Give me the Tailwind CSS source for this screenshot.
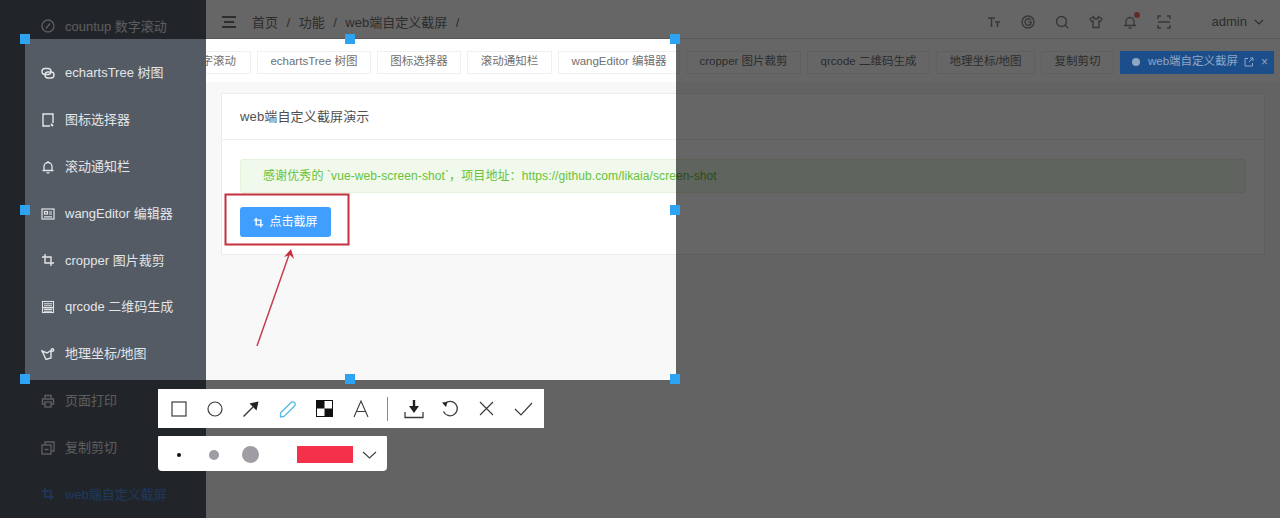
<!DOCTYPE html>
<html lang="zh-CN">
<head>
  <meta charset="UTF-8" />
  <title>web端自定义截屏</title>
  <script src="https://cdn.jsdelivr.net/npm/@tailwindcss/browser@4"></script>
</head>
<body class="relative h-screen overflow-hidden bg-[#f8f8f8] font-['Liberation_Sans','Noto_Sans_CJK_SC',sans-serif] text-[#707070]">
  <div class="flex h-full">

    <!-- sidebar -->
    <aside class="w-[206px] shrink-0 overflow-hidden bg-[#545b64] pt-[3px] text-[13px] text-[#e3e5e8]">
      <div class="flex h-[46.8px] items-center gap-[10px] pl-[41px]">
        <svg class="size-[14px]" viewBox="0 0 14 14" fill="none" stroke="currentColor" stroke-width="1.4"><circle cx="7" cy="7" r="6"/><path d="M5 9.5 9 4.5"/></svg>
        <span>countup 数字滚动</span>
      </div>
      <div class="flex h-[46.8px] items-center gap-[10px] pl-[41px]">
        <svg class="size-[14px]" viewBox="0 0 14 14" fill="none" stroke="currentColor" stroke-width="1.4"><rect x="1" y="2.5" width="9" height="6" rx="3"/><rect x="4" y="6" width="9" height="6" rx="3"/></svg>
        <span>echartsTree 树图</span>
      </div>
      <div class="flex h-[46.8px] items-center gap-[10px] pl-[41px]">
        <svg class="size-[14px]" viewBox="0 0 14 14" fill="none" stroke="currentColor" stroke-width="1.4"><path d="M9 13H2V1h10v9"/><path d="M10 11l2 2" stroke-width="2"/></svg>
        <span>图标选择器</span>
      </div>
      <div class="flex h-[46.8px] items-center gap-[10px] pl-[41px]">
        <svg class="size-[14px]" viewBox="0 0 14 14" fill="none" stroke="currentColor" stroke-width="1.3"><path d="M3 10.500V6.500a4 4 0 0 1 8 0v4zM1.500 10.500h11M5.500 12.800h3M7 1v1"/></svg>
        <span>滚动通知栏</span>
      </div>
      <div class="flex h-[46.8px] items-center gap-[10px] pl-[41px]">
        <svg class="size-[14px]" viewBox="0 0 14 14" fill="none" stroke="currentColor" stroke-width="1.2"><rect x="1" y="2" width="12" height="10"/><rect x="3.500" y="4.500" width="3" height="2.500"/><path d="M8 5h3M8 7h3M3 9.800h8"/></svg>
        <span>wangEditor 编辑器</span>
      </div>
      <div class="flex h-[46.8px] items-center gap-[10px] pl-[41px]">
        <svg class="size-[14px]" viewBox="0 0 14 14" fill="none" stroke="currentColor" stroke-width="1.4"><path d="M4 1v9h9M1 4h9v9"/></svg>
        <span>cropper 图片裁剪</span>
      </div>
      <div class="flex h-[46.8px] items-center gap-[10px] pl-[41px]">
        <svg class="size-[14px]" viewBox="0 0 14 14" fill="none" stroke="currentColor" stroke-width="1.1"><rect x="1.500" y="1.500" width="11" height="11"/><path d="M3 3.800h8M3 5.800h8M1.500 7.600h11M3 9.400h8M3 11.200h8"/></svg>
        <span>qrcode 二维码生成</span>
      </div>
      <div class="flex h-[46.8px] items-center gap-[10px] pl-[41px]">
        <svg class="size-[14px]" viewBox="0 0 14 14" fill="none" stroke="currentColor" stroke-width="1.4"><path d="M1 4l5 2 4-2.500V11l-5 1.500L3 8z"/><circle cx="11.500" cy="3" r="1.200"/></svg>
        <span>地理坐标/地图</span>
      </div>
      <div class="flex h-[46.8px] items-center gap-[10px] pl-[41px]">
        <svg class="size-[14px]" viewBox="0 0 14 14" fill="none" stroke="currentColor" stroke-width="1.4"><path d="M4 5V1.500h6V5M4 10H1.500V5h11v5H10"/><rect x="4" y="8" width="6" height="5"/></svg>
        <span>页面打印</span>
      </div>
      <div class="flex h-[46.8px] items-center gap-[10px] pl-[41px]">
        <svg class="size-[14px]" viewBox="0 0 14 14" fill="none" stroke="currentColor" stroke-width="1.4"><rect x="1" y="4" width="9" height="9"/><path d="M4 4V1h9v9h-3M3.500 8.500h4"/></svg>
        <span>复制剪切</span>
      </div>
      <div class="flex h-[46.8px] items-center gap-[10px] pl-[41px] text-[#4a90e8]">
        <svg class="size-[14px]" viewBox="0 0 14 14" fill="none" stroke="currentColor" stroke-width="1.4"><path d="M4 1v9h9M1 4h9v9"/></svg>
        <span>web端自定义截屏</span>
      </div>
    </aside>

    <div class="flex min-w-0 flex-1 flex-col">
      <!-- top bar -->
      <header class="flex h-[39px] shrink-0 items-center border-b border-[#dedede] bg-white pt-[6px] text-[13px]">
        <svg class="ml-[16px] h-[12px] w-[14px]" viewBox="0 0 14 12" fill="currentColor"><path d="M0 0h14v2H0zM2 5h10v2H2zM0 10h14v2H0z"/></svg>
        <nav class="ml-[16px] flex translate-y-[1px] gap-[8.5px]">
          <span>首页</span><span>/</span><span>功能</span><span>/</span><span>web端自定义截屏</span><span>/</span>
        </nav>
        <div class="ml-auto flex items-center gap-[20px] text-[#8a8a8a]">
          <svg class="size-[14px]" viewBox="0 0 14 14" fill="none" stroke="currentColor" stroke-width="1.5"><path d="M1 3h7M4.500 3v9M8 7h5M10.500 7v5"/></svg>
          <svg class="size-[14px]" viewBox="0 0 14 14" fill="none" stroke="currentColor" stroke-width="1.4"><circle cx="7" cy="7" r="6"/><path d="M10 5a3.300 3.300 0 1 0 0 4V7H7.500"/></svg>
          <svg class="size-[14px]" viewBox="0 0 14 14" fill="none" stroke="currentColor" stroke-width="1.4"><circle cx="6.500" cy="6.500" r="5"/><path d="M10 10l3 3"/></svg>
          <svg class="size-[14px]" viewBox="0 0 14 14" fill="none" stroke="currentColor" stroke-width="1.4"><path d="M4.500 1.500 1 4l1.500 2.500L4 6v6.500h6V6l1.500.5L13 4 9.500 1.500a2.500 2.500 0 0 1-5 0z"/></svg>
          <span class="relative">
            <svg class="size-[14px]" viewBox="0 0 14 14" fill="none" stroke="currentColor" stroke-width="1.3"><path d="M3 10.500V6.500a4 4 0 0 1 8 0v4zM1 10.500h12M5.500 13h3"/></svg>
            <span class="absolute top-[-3px] right-[-3px] size-[6px] rounded-full bg-[#f56c6c]"></span>
          </span>
          <svg class="size-[14px]" viewBox="0 0 14 14" fill="none" stroke="currentColor" stroke-width="1.4"><path d="M1 4V1h3M10 1h3v3M13 10v3h-3M4 13H1v-3M1 7h12"/></svg>
        </div>
        <span class="ml-[41px]">admin</span>
        <svg class="mr-[16px] ml-[7px] h-[6px] w-[10px]" viewBox="0 0 10 6" fill="none" stroke="currentColor" stroke-width="1.2"><path d="M1 1l4 4 4-4"/></svg>
      </header>

      <!-- tabs -->
      <div class="flex h-[43px] shrink-0 items-center justify-end gap-[6px] overflow-hidden bg-white pt-[3px] pr-[6px] text-[11.5px]">
        <div class="flex h-[23px] w-[120px] shrink-0 items-center justify-center border border-[#f0f0f0] bg-white">countup 数字滚动</div>
        <div class="flex h-[23px] w-[114px] shrink-0 items-center justify-center border border-[#f0f0f0] bg-white">echartsTree 树图</div>
        <div class="flex h-[23px] w-[84px] shrink-0 items-center justify-center border border-[#f0f0f0] bg-white">图标选择器</div>
        <div class="flex h-[23px] w-[85px] shrink-0 items-center justify-center border border-[#f0f0f0] bg-white">滚动通知栏</div>
        <div class="flex h-[23px] w-[122px] shrink-0 items-center justify-center border border-[#f0f0f0] bg-white">wangEditor 编辑器</div>
        <div class="flex h-[23px] w-[115px] shrink-0 items-center justify-center border border-[#f0f0f0] bg-white">cropper 图片裁剪</div>
        <div class="flex h-[23px] w-[123px] shrink-0 items-center justify-center border border-[#f0f0f0] bg-white">qrcode 二维码生成</div>
        <div class="flex h-[23px] w-[99px] shrink-0 items-center justify-center border border-[#f0f0f0] bg-white">地理坐标/地图</div>
        <div class="flex h-[23px] w-[73px] shrink-0 items-center justify-center border border-[#f0f0f0] bg-white">复制剪切</div>
        <div class="relative z-10 flex h-[23px] w-[154px] shrink-0 items-center bg-[#1c4e8c] pl-[12px] text-[#8fa6c4]">
          <span class="size-[8px] rounded-full bg-[#8fa6c4]"></span>
          <span class="ml-[8px]">web端自定义截屏</span>
          <svg class="ml-[6px] size-[10px]" viewBox="0 0 10 10" fill="none" stroke="currentColor" stroke-width="1"><path d="M4 1.500H1v7.500h7.500V6M5 5l4-4M6 1h3v3"/></svg>
          <span class="ml-[7px] text-[12px] leading-none">×</span>
        </div>
      </div>

      <!-- content -->
      <main class="flex-1 px-[15px] pt-[11px]">
        <section class="h-[162px] w-[1044px] border border-[#ececec] bg-white">
          <h2 class="flex h-[46px] items-center border-b border-[#ebeef5] pl-[18px] text-[13px] font-normal tracking-[0.15px] text-[#505050]">web端自定义截屏演示</h2>
          <div class="px-[18px] pt-[19px]">
            <div class="flex h-[34px] w-[1006px] items-center rounded-[3px] border border-[#e4f2da] bg-[#f0f9eb] pl-[22px] text-[12px] tracking-[0.1px] text-[#67c23a]">感谢优秀的 `vue-web-screen-shot`，项目地址：https://github.com/likaia/screen-shot</div>
            <button class="mt-[14px] flex h-[30px] w-[91px] items-center justify-center gap-[5px] rounded-[3px] bg-[#409eff] text-[12px] text-white">
              <svg class="size-[11px]" viewBox="0 0 14 14" fill="none" stroke="currentColor" stroke-width="1.800"><path d="M4 1v9h9M1 4h9v9"/></svg>
              点击截屏
            </button>
          </div>
        </section>
      </main>
    </div>
  </div>

  <!-- screenshot selection: everything outside it is dimmed -->
  <div class="absolute top-[39px] left-[25px] h-[341px] w-[651px] shadow-[0_0_0_2000px_rgba(0,0,0,0.6)]">
    <svg class="absolute top-0 left-0 h-[341px] w-[651px]" viewBox="0 0 651 341" fill="none">
      <rect x="200.500" y="155.500" width="123" height="50" stroke="#c4313c" stroke-width="2"/>
      <path d="M232 307 265 213" stroke="#c4404c" stroke-width="1.500"/>
      <path d="M266 210 259 218 265 216 269 220z" fill="#c4313c"/>
    </svg>
    <span class="absolute top-[-5px] left-[-5px] size-[10px] bg-[#2ea3f2]"></span>
    <span class="absolute top-[-5px] left-[320px] size-[10px] bg-[#2ea3f2]"></span>
    <span class="absolute top-[-5px] left-[645px] size-[10px] bg-[#2ea3f2]"></span>
    <span class="absolute top-[166px] left-[-5px] size-[10px] bg-[#2ea3f2]"></span>
    <span class="absolute top-[166px] left-[645px] size-[10px] bg-[#2ea3f2]"></span>
    <span class="absolute top-[335px] left-[-5px] size-[10px] bg-[#2ea3f2]"></span>
    <span class="absolute top-[335px] left-[320px] size-[10px] bg-[#2ea3f2]"></span>
    <span class="absolute top-[335px] left-[645px] size-[10px] bg-[#2ea3f2]"></span>
  </div>

  <!-- tool bar -->
  <div class="absolute top-[389px] left-[158px] flex h-[39px] w-[386px] items-center bg-white pl-[2.5px] text-[#3c3c3c]">
    <div class="flex w-[36.4px] justify-center">
      <svg class="size-[16px]" viewBox="0 0 16 16" fill="none" stroke="currentColor" stroke-width="1.200"><rect x="1" y="1" width="14" height="14"/></svg>
    </div>
    <div class="flex w-[36.4px] justify-center">
      <svg class="size-[16px]" viewBox="0 0 16 16" fill="none" stroke="currentColor" stroke-width="1.200"><circle cx="8" cy="8" r="7"/></svg>
    </div>
    <div class="flex w-[36.4px] justify-center">
      <svg class="size-[18px]" viewBox="0 0 18 18" fill="none" stroke="currentColor" stroke-width="1.400"><path d="M1.500 16.500 11 7"/><path d="M7.500 3.500 16.500 1.500 14.500 10.500z" fill="#222222" stroke="none"/></svg>
    </div>
    <div class="flex w-[36.4px] justify-center">
      <svg class="size-[18px]" viewBox="0 0 18 18" fill="none" stroke="#55b7e6" stroke-width="1.300"><path d="M1.500 13 12 2.500a2.100 2.100 0 0 1 3.500 3.500L5 16.500l-3.500.5z"/></svg>
    </div>
    <div class="flex w-[36.4px] justify-center">
      <svg class="size-[17px]" viewBox="0 0 17 17"><rect x=".5" y=".5" width="16" height="16" fill="#ffffff" stroke="#111111"/><path d="M1 1h7.500v7.500H1zM8.500 8.500H16V16H8.500z" fill="#111111"/></svg>
    </div>
    <div class="flex w-[36.4px] justify-center">
      <svg class="size-[18px]" viewBox="0 0 18 18" fill="none" stroke="currentColor" stroke-width="1.100"><path d="M2 17 9 1l7 16M4.500 11.500h9"/></svg>
    </div>
    <span class="mx-[8px] h-[24px] w-px bg-[#8a8a8a]"></span>
    <div class="flex w-[36.4px] justify-center">
      <svg class="size-[20px]" viewBox="0 0 20 20" fill="none" stroke="currentColor" stroke-width="1.300"><path d="M1 13v5.500h18V13"/><path d="M8.800 1h2.400v6H15l-5 7-5-7h3.800z" fill="#222222" stroke="none"/></svg>
    </div>
    <div class="flex w-[36.4px] justify-center">
      <svg class="size-[18px]" viewBox="0 0 18 18" fill="none" stroke="currentColor" stroke-width="1.300"><path d="M4 3.500a7.200 7.200 0 1 1-1.500 8"/><path d="M1 2.500 6.500 2 5 7z" fill="#222222" stroke="none"/></svg>
    </div>
    <div class="flex w-[36.4px] justify-center">
      <svg class="size-[15px]" viewBox="0 0 15 15" fill="none" stroke="currentColor" stroke-width="1.200"><path d="M1 1l13 13M14 1 1 14"/></svg>
    </div>
    <div class="flex w-[36.4px] justify-center">
      <svg class="h-[14px] w-[19px]" viewBox="0 0 19 14" fill="none" stroke="currentColor" stroke-width="1.200"><path d="M1 7l6 6L18 1"/></svg>
    </div>
  </div>

  <!-- brush and colour panel -->
  <div class="absolute top-[436px] left-[158px] flex h-[35px] w-[229px] items-center rounded-t-[1px] rounded-b-[4px] bg-white pt-[2px]">
    <span class="ml-[18.5px] size-[4px] rounded-full bg-[#111111]"></span>
    <span class="ml-[28.5px] size-[10px] rounded-full bg-[#a09ca3]"></span>
    <span class="ml-[22.5px] size-[17px] rounded-full bg-[#a09ca3]"></span>
    <span class="ml-[38px] h-[17px] w-[56px] bg-[#f5304a]"></span>
    <svg class="ml-[9.5px] h-[8px] w-[15px]" viewBox="0 0 15 8" fill="none" stroke="#444444" stroke-width="1.200"><path d="M1 1l6.500 6L14 1"/></svg>
  </div>
</body>
</html>
